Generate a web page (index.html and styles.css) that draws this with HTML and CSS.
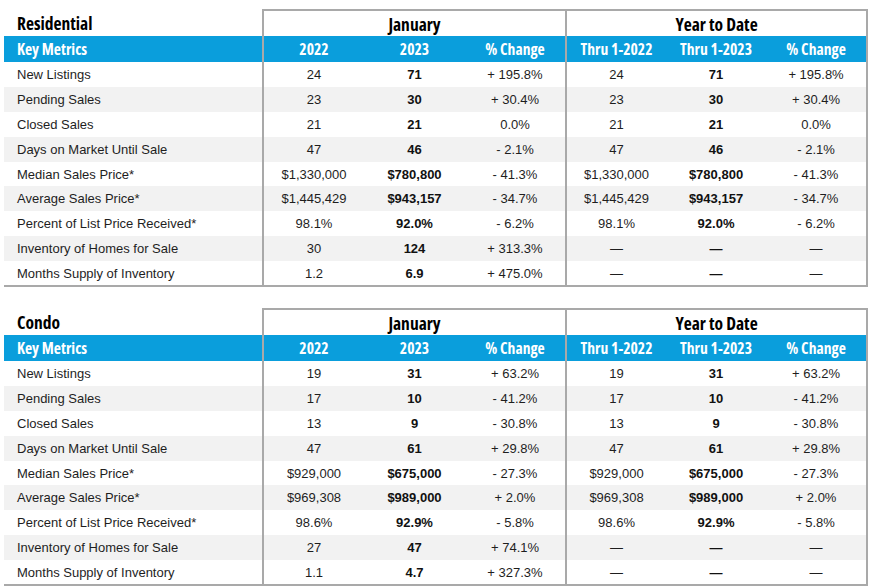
FILE: index.html
```html
<!DOCTYPE html>
<html>
<head>
<meta charset="utf-8">
<link rel="stylesheet" href="styles.css">
</head>
<body>
<div class="page">
  <table class="metrics">
    <colgroup>
      <col class="c-label"><col class="c-a"><col class="c-a"><col class="c-a"><col class="c-b"><col class="c-b"><col class="c-c">
    </colgroup>
    <thead>
      <tr class="title-row">
        <th class="title">Residential</th>
        <th class="group" colspan="3">January</th>
        <th class="group" colspan="3">Year to Date</th>
      </tr>
      <tr class="head-row">
        <th class="label">Key Metrics</th>
        <th class="gl">2022</th><th>2023</th><th class="gr">% Change</th>
        <th class="gl">Thru 1-2022</th><th>Thru 1-2023</th><th class="gr">% Change</th>
      </tr>
    </thead>
    <tbody>
      <tr><td class="label">New Listings</td><td class="gl">24</td><td class="b">71</td><td class="gr">+ 195.8%</td><td class="gl">24</td><td class="b">71</td><td class="gr">+ 195.8%</td></tr>
      <tr><td class="label">Pending Sales</td><td class="gl">23</td><td class="b">30</td><td class="gr">+ 30.4%</td><td class="gl">23</td><td class="b">30</td><td class="gr">+ 30.4%</td></tr>
      <tr><td class="label">Closed Sales</td><td class="gl">21</td><td class="b">21</td><td class="gr">0.0%</td><td class="gl">21</td><td class="b">21</td><td class="gr">0.0%</td></tr>
      <tr><td class="label">Days on Market Until Sale</td><td class="gl">47</td><td class="b">46</td><td class="gr">- 2.1%</td><td class="gl">47</td><td class="b">46</td><td class="gr">- 2.1%</td></tr>
      <tr><td class="label">Median Sales Price*</td><td class="gl">$1,330,000</td><td class="b">$780,800</td><td class="gr">- 41.3%</td><td class="gl">$1,330,000</td><td class="b">$780,800</td><td class="gr">- 41.3%</td></tr>
      <tr><td class="label">Average Sales Price*</td><td class="gl">$1,445,429</td><td class="b">$943,157</td><td class="gr">- 34.7%</td><td class="gl">$1,445,429</td><td class="b">$943,157</td><td class="gr">- 34.7%</td></tr>
      <tr><td class="label">Percent of List Price Received*</td><td class="gl">98.1%</td><td class="b">92.0%</td><td class="gr">- 6.2%</td><td class="gl">98.1%</td><td class="b">92.0%</td><td class="gr">- 6.2%</td></tr>
      <tr><td class="label">Inventory of Homes for Sale</td><td class="gl">30</td><td class="b">124</td><td class="gr">+ 313.3%</td><td class="gl">—</td><td class="b">—</td><td class="gr">—</td></tr>
      <tr><td class="label">Months Supply of Inventory</td><td class="gl">1.2</td><td class="b">6.9</td><td class="gr">+ 475.0%</td><td class="gl">—</td><td class="b">—</td><td class="gr">—</td></tr>
    </tbody>
  </table>

  <table class="metrics">
    <colgroup>
      <col class="c-label"><col class="c-a"><col class="c-a"><col class="c-a"><col class="c-b"><col class="c-b"><col class="c-c">
    </colgroup>
    <thead>
      <tr class="title-row">
        <th class="title">Condo</th>
        <th class="group" colspan="3">January</th>
        <th class="group" colspan="3">Year to Date</th>
      </tr>
      <tr class="head-row">
        <th class="label">Key Metrics</th>
        <th class="gl">2022</th><th>2023</th><th class="gr">% Change</th>
        <th class="gl">Thru 1-2022</th><th>Thru 1-2023</th><th class="gr">% Change</th>
      </tr>
    </thead>
    <tbody>
      <tr><td class="label">New Listings</td><td class="gl">19</td><td class="b">31</td><td class="gr">+ 63.2%</td><td class="gl">19</td><td class="b">31</td><td class="gr">+ 63.2%</td></tr>
      <tr><td class="label">Pending Sales</td><td class="gl">17</td><td class="b">10</td><td class="gr">- 41.2%</td><td class="gl">17</td><td class="b">10</td><td class="gr">- 41.2%</td></tr>
      <tr><td class="label">Closed Sales</td><td class="gl">13</td><td class="b">9</td><td class="gr">- 30.8%</td><td class="gl">13</td><td class="b">9</td><td class="gr">- 30.8%</td></tr>
      <tr><td class="label">Days on Market Until Sale</td><td class="gl">47</td><td class="b">61</td><td class="gr">+ 29.8%</td><td class="gl">47</td><td class="b">61</td><td class="gr">+ 29.8%</td></tr>
      <tr><td class="label">Median Sales Price*</td><td class="gl">$929,000</td><td class="b">$675,000</td><td class="gr">- 27.3%</td><td class="gl">$929,000</td><td class="b">$675,000</td><td class="gr">- 27.3%</td></tr>
      <tr><td class="label">Average Sales Price*</td><td class="gl">$969,308</td><td class="b">$989,000</td><td class="gr">+ 2.0%</td><td class="gl">$969,308</td><td class="b">$989,000</td><td class="gr">+ 2.0%</td></tr>
      <tr><td class="label">Percent of List Price Received*</td><td class="gl">98.6%</td><td class="b">92.9%</td><td class="gr">- 5.8%</td><td class="gl">98.6%</td><td class="b">92.9%</td><td class="gr">- 5.8%</td></tr>
      <tr><td class="label">Inventory of Homes for Sale</td><td class="gl">27</td><td class="b">47</td><td class="gr">+ 74.1%</td><td class="gl">—</td><td class="b">—</td><td class="gr">—</td></tr>
      <tr><td class="label">Months Supply of Inventory</td><td class="gl">1.1</td><td class="b">4.7</td><td class="gr">+ 327.3%</td><td class="gl">—</td><td class="b">—</td><td class="gr">—</td></tr>
    </tbody>
  </table>
</div>
</body>
</html>
```

FILE: styles.css
```css
html, body {
  margin: 0;
  background: #ffffff;
}

body {
  font-family: "Liberation Sans", Arial, Helvetica, sans-serif;
  font-size: 13px;
  color: #1e1e1e;
}

.page {
  display: flex;
  flex-direction: column;
  gap: 21px;
  padding: 9px 0 0 4px;
}

.metrics {
  border-collapse: collapse;
  table-layout: fixed;
  width: 863px;
}

.c-label { width: 259px; }
.c-a { width: 101px; }
.c-b { width: 100px; }
.c-c { width: 101px; }

.metrics th,
.metrics td {
  padding: 0;
  text-align: center;
  vertical-align: middle;
  white-space: nowrap;
}

.metrics th {
  font-family: "Open Sans", "Roboto", sans-serif;
  font-stretch: 75%;
  font-weight: 700;
}

.title-row {
  height: 26px;
}

.title-row th {
  font-size: 17.5px;
  color: #000;
}

.title-row .title {
  text-align: left;
  padding-left: 13px;
}

.title-row .group {
  border: 2px solid #a9a9a9;
  border-bottom: none;
}

.head-row {
  height: 26px;
  background: #0a9edc;
}

.head-row th {
  font-size: 15.6px;
  color: #ffffff;
}

.head-row .label {
  text-align: left;
  padding-left: 13px;
}

.metrics tbody tr {
  height: 24.9px;
}

.metrics tbody tr:nth-child(even) {
  background: #f2f2f2;
}

.metrics td.label {
  text-align: left;
  padding-left: 13px;
}

.metrics .gl {
  border-left: 2px solid #a9a9a9;
}

.metrics .gr {
  border-right: 2px solid #a9a9a9;
}

.metrics td.b {
  font-weight: bold;
  color: #111;
}

.metrics tbody tr:last-child td {
  border-bottom: 2px solid #a9a9a9;
}
```
